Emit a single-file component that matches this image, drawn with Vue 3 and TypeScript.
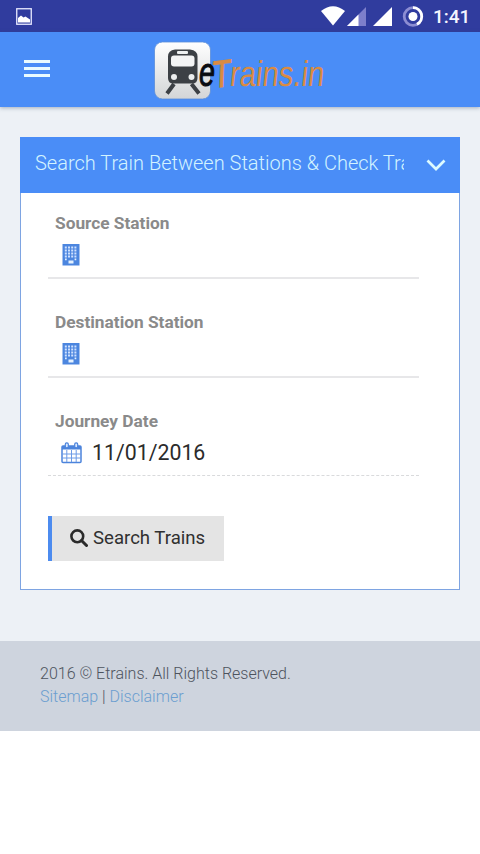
<script setup lang="ts">
interface Station {
  id: string
  label: string
}

const stations: Station[] = [
  { id: 'source', label: 'Source Station' },
  { id: 'destination', label: 'Destination Station' },
]
const columns = [3.8, 7, 10.2, 13.4]
const rows = [2.5, 5.500, 8.500, 11.500]
const journeyDate = '11/01/2016'
</script>

<template>
  <div class="screen">
    <div class="status">
      <svg class="photo" width="16" height="17" viewBox="0 0 16 17">
        <rect x=".75" y=".75" width="14.5" height="15.5" fill="none" stroke="#e9eaff" stroke-width="1.3" />
        <path d="M2 14.5V10l3-2.5 2.5 2 2-1 4.500 3v3z" fill="#fff" />
      </svg>
      <div class="indicators">
        <svg width="104" height="22" viewBox="0 0 104 22">
          <path d="M0 6Q12-3.500 24 6L12 20.500z" fill="#fff" />
          <path d="M45 2v19H26z" fill="#7d7fcb" />
          <path d="M37.500 9.500V21H26z" fill="#fff" />
          <path d="M71 2v19H52z" fill="#fff" />
          <circle cx="92" cy="11.500" r="8.800" fill="none" stroke="#8c8dd2" stroke-width="2.800" />
          <path d="M92 2.700a8.800 8.800 0 0 1 4 16.600" fill="none" stroke="#fff" stroke-width="2.800" />
          <circle cx="92" cy="11.500" r="4.500" fill="#fff" />
        </svg>
        <span class="clock">1:41</span>
      </div>
    </div>

    <header class="bar">
      <button class="menu" aria-label="Menu"><i></i><i></i><i></i></button>
      <svg class="logo" width="174" height="62" viewBox="0 0 174 62">
        <defs>
          <linearGradient id="tile" x1="0" y1="0" x2="0" y2="1">
            <stop offset="0" stop-color="#fff" />
            <stop offset="1" stop-color="#d3d5d7" />
          </linearGradient>
        </defs>
        <rect x="1.500" y="2" width="56" height="57" rx="8" fill="url(#tile)" stroke="#5b8dd8" stroke-width=".8" />
        <path d="M21 44 14 53.500M38.500 44l7.500 9.500" stroke="#3c4045" stroke-width="4" />
        <path d="M22 9.500h15q7.500 1 7.500 7V38q0 5.500-5.500 5.500H20.500q-5.500 0-5.500-5.500V16.500q0-6 7-7z" fill="#3c4045" />
        <rect x="24" y="11" width="11" height="3" rx="1" fill="#edf0f1" />
        <rect x="18" y="15.500" width="23.500" height="11" rx="3" fill="#f3f4f5" />
        <circle cx="21" cy="37" r="3" fill="#eceeef" />
        <circle cx="38.500" cy="37" r="3" fill="#eceeef" />
        <text class="logo-e" x="46" y="45.500" textLength="16" lengthAdjust="spacingAndGlyphs">e</text>
        <text class="logo-t" x="59" y="47" textLength="19" lengthAdjust="spacingAndGlyphs" transform="rotate(-7 68 35)">T</text>
        <text class="logo-name" x="81" y="46.500" textLength="94" lengthAdjust="spacingAndGlyphs" transform="skewX(-6)">rains.in</text>
      </svg>
    </header>

    <main>
      <section class="card">
        <div class="card-head">
          <h1>Search Train Between Stations &amp; Check Trains</h1>
          <svg width="20" height="13" viewBox="0 0 20 13"><path d="M1.500 1.500 10 10l8.500-8.500" fill="none" stroke="#dcfaff" stroke-width="2.700" /></svg>
        </div>
        <form @submit.prevent>
          <div v-for="station in stations" :key="station.id" class="field">
            <label>{{ station.label }}</label>
            <div class="value">
              <svg width="18" height="22" viewBox="0 0 18 22">
                <path d="M.5 0h17v21.500H.5z" fill="#4c86df" />
                <template v-for="y in rows" :key="y">
                  <rect v-for="x in columns" :key="x" :x="x - 1" :y="y" width="2" height="2" fill="#cfe2ff" />
                </template>
                <path d="M3 14.500h1.700v1.700H3zm9.600 0h1.700v1.700h-1.700zM6.500 16.500h5v3h-5z" fill="#e4f1ff" />
              </svg>
            </div>
          </div>
          <div class="field dashed">
            <label>Journey Date</label>
            <div class="value">
              <svg class="calendar" width="21" height="22" viewBox="0 0 21 22">
                <rect x="1" y="4" width="19" height="16.500" rx="1" fill="#fff" stroke="#4c84dc" stroke-width="1.500" />
                <path d="M1 4h19v3.500H1z" fill="#4c84dc" />
                <path d="M1 12h19M1 16h19M5.800 8v12M10.500 8v12M15.200 8v12" stroke="#6c9be6" stroke-width="1" />
                <rect x="4.300" y=".8" width="3" height="5" rx="1.400" fill="#d8e8ff" stroke="#4c84dc" stroke-width="1.200" />
                <rect x="13.700" y=".8" width="3" height="5" rx="1.400" fill="#d8e8ff" stroke="#4c84dc" stroke-width="1.200" />
              </svg>
              <span class="date">{{ journeyDate }}</span>
            </div>
          </div>
          <button class="search">
            <svg width="18" height="18" viewBox="0 0 18 18"><circle cx="7.300" cy="7.300" r="5.900" fill="none" stroke="#2b2b2b" stroke-width="2.600" /><path d="m11.500 11.500 5 5" stroke="#2b2b2b" stroke-width="3" stroke-linecap="round" /></svg>
            <span>Search Trains</span>
          </button>
        </form>
      </section>
    </main>

    <footer>
      <p>2016 © Etrains. All Rights Reserved.</p>
      <p><a>Sitemap</a> | <a>Disclaimer</a></p>
    </footer>
  </div>
</template>

<style>
body {
  background: #fff;
}
</style>

<style scoped>
.screen {
  width: 480px;
  height: 854px;
  overflow: hidden;
  background: #fff;
  font-family: Roboto, sans-serif;
}
.screen * {
  box-sizing: border-box;
}
svg {
  display: block;
  flex: none;
}
.status {
  height: 32px;
  padding: 0 12px 0 16px;
  display: flex;
  align-items: center;
  justify-content: space-between;
  background: #303c9e;
}
.indicators {
  display: flex;
  align-items: center;
  gap: 8px;
}
.clock {
  width: 35px;
  padding-top: 1px;
  color: #f4f5ff;
  font-size: 19px;
  font-weight: 500;
  line-height: 31px;
  white-space: nowrap;
}
.bar {
  position: relative;
  z-index: 1;
  height: 75px;
  display: flex;
  align-items: flex-start;
  padding: 8px 0 0 24px;
  background: #4a8df7;
  box-shadow: 0 1px 4px rgba(50, 75, 105, .4);
}
.menu {
  width: 26px;
  margin: 20px 103px 0 0;
  padding: 0;
  display: flex;
  flex-direction: column;
  gap: 4px;
  border: 0;
  background: none;
}
.menu i {
  width: 26px;
  height: 3px;
  background: #e9fbff;
}
.logo {
  overflow: visible;
}
.logo-e {
  font: italic 41px "Liberation Sans", sans-serif;
  fill: #090c12;
  stroke: #090c12;
  stroke-width: 1px;
}
.logo-t {
  font: italic 38px "Liberation Sans", sans-serif;
  fill: #d98b43;
  stroke: #d98b43;
  stroke-width: 1px;
}
.logo-name {
  font: 36px "Liberation Sans", sans-serif;
  fill: #d98b43;
}
main {
  height: 534px;
  padding: 30px 20px 0;
  background: #edf1f6;
}
.card {
  height: 453px;
  border: 1px solid #7ea4e2;
  background: #fff;
}
.card-head {
  height: 56px;
  margin: -1px -1px 0;
  padding: 0 14px 0 15px;
  display: flex;
  justify-content: space-between;
  border: 0 solid #6f9be6;
  background: #4a8df7;
}
.card-head svg {
  margin-top: 22px;
}
h1 {
  width: 369px;
  margin: 0;
  overflow: hidden;
  color: #d3f3ff;
  font-size: 20px;
  font-weight: 300;
  line-height: 52px;
  white-space: nowrap;
}
form {
  padding: 15px 40px 0 27px;
}
.field {
  height: 71px;
  margin-bottom: 28px;
  border-bottom: 2px solid #e7e7e9;
}
.field.dashed {
  height: 70px;
  border-bottom: 1px dashed #d9dadc;
}
label {
  display: block;
  padding-left: 7px;
  color: #8a8a8a;
  font-size: 17.300px;
  font-weight: 700;
  line-height: 30px;
}
.value {
  height: 34px;
  padding-left: 14px;
  display: flex;
  align-items: center;
  gap: 10px;
}
.calendar {
  margin-left: -1px;
}
.date {
  color: #2b2b2b;
  font-size: 21.300px;
  line-height: 34px;
}
.search {
  width: 176px;
  height: 45px;
  margin-top: 40px;
  padding: 0 0 1px 18px;
  display: flex;
  align-items: center;
  gap: 5px;
  border: 0;
  border-left: 4px solid #4c8bef;
  background: #e4e4e4;
  color: #303030;
  font: 400 18.600px Roboto, sans-serif;
  white-space: nowrap;
}
.dashed + .search {
  margin-top: 40px;
}
.field.dashed {
  margin-bottom: 0;
}
footer {
  height: 90px;
  padding: 21px 40px 0;
  background: #ced4de;
}
p {
  margin: 0;
  color: #4d535d;
  font-size: 16px;
  font-weight: 300;
  line-height: 23px;
}
a {
  color: #6b9ed0;
}
</style>
